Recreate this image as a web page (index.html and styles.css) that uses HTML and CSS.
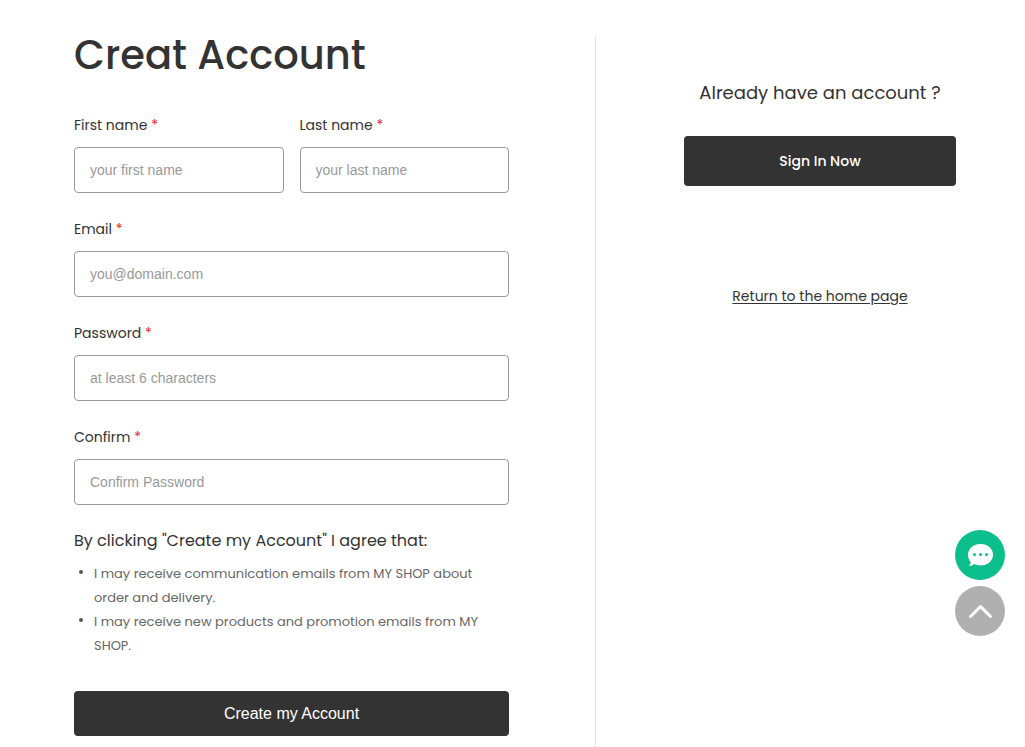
FILE: index.html
```
<!DOCTYPE html>
<html lang="en">
<head>
    <meta charset="UTF-8">
    <meta name="viewport" content="width=device-width, initial-scale=1">
    <title>Creat Account</title>
    <link rel="stylesheet" href="styles.css">
</head>
<body>
    <main class="account">
        <form class="register">
            <h1>Creat Account</h1>

            <div class="name-row">
                <div class="field">
                    <label for="firstName">First name <span class="required">*</span></label>
                    <input type="text" id="firstName" placeholder="your first name">
                </div>
                <div class="field">
                    <label for="lastName">Last name <span class="required">*</span></label>
                    <input type="text" id="lastName" placeholder="your last name">
                </div>
            </div>

            <div class="field">
                <label for="email">Email <span class="required">*</span></label>
                <input type="email" id="email" placeholder="you@domain.com">
            </div>

            <div class="field">
                <label for="password">Password <span class="required">*</span></label>
                <input type="password" id="password" placeholder="at least 6 characters">
            </div>

            <div class="field">
                <label for="confirm">Confirm <span class="required">*</span></label>
                <input type="password" id="confirm" placeholder="Confirm Password">
            </div>

            <p class="terms-title">By clicking "Create my Account" I agree that:</p>
            <ul class="terms">
                <li>I may receive communication emails from MY SHOP about order and delivery.</li>
                <li>I may receive new products and promotion emails from MY SHOP.</li>
            </ul>

            <button type="submit" class="btn btn-create">Create my Account</button>
        </form>

        <aside class="login">
            <h2>Already have an account ?</h2>
            <a href="#" class="btn btn-login">Sign In Now</a>
            <a href="#" class="home-link">Return to the home page</a>
        </aside>
    </main>

    <div class="float-tools">
        <button type="button" class="float-btn chat" aria-label="Chat">
            <svg width="50" height="50" viewBox="0 0 50 50">
                <path fill="#fff" d="M25.500 14C32.500 14 38 18.700 38 24.700S32.500 35.500 25.500 35.500c-2.400 0-4.600-.5-6.500-1.400-1.300 1.200-2.700 1.900-4 1.900-.7 0-.8-.7-.3-1.200.8-.9 1-1.900.9-2.900C14 30.100 13 27.500 13 24.700 13 18.700 18.500 14 25.500 14z"/>
                <circle cx="19.500" cy="24.500" r="1.500" fill="#0abf8c"/>
                <circle cx="25.500" cy="24.500" r="1.500" fill="#0abf8c"/>
                <circle cx="31.500" cy="24.500" r="1.500" fill="#0abf8c"/>
            </svg>
        </button>
        <button type="button" class="float-btn to-top" aria-label="Back to top">
            <svg width="50" height="50" viewBox="0 0 50 50">
                <path fill="none" stroke="#fff" stroke-width="3" stroke-linecap="round" stroke-linejoin="round" d="M15.500 30.500l10-10 10 10"/>
            </svg>
        </button>
    </div>
</body>
</html>
```
FILE: styles.css
```
:root {
    --dark-color: #333;
    --text-color: #666;
    --border-color: #999;
    --required-color: #f5222d;
    --chat-color: #0abf8c;
}

* {
    box-sizing: border-box;
}

body {
    font-family: 'Poppins', 'Inter', sans-serif;
    font-size: 14px;
    color: var(--dark-color);
    background-color: #fff;
    margin: 0;
}

.account {
    display: grid;
    grid-template-columns: 1fr 361px;
    column-gap: 86px;
    min-height: 100vh;
    padding: 36px 69px 0 74px;
}

h1 {
    margin: 0 0 40px;
    font-size: 40px;
    font-weight: 500;
    line-height: 38px;
}

.name-row {
    display: grid;
    grid-template-columns: 1fr 1fr;
    column-gap: 16px;
}

.field {
    margin-bottom: 25px;
}

label {
    display: block;
    margin-bottom: 10px;
    font-size: 14px;
    line-height: 23px;
}

.required {
    color: var(--required-color);
}

input {
    display: block;
    width: 100%;
    height: 46px;
    padding: 0 15px;
    border: 1px solid var(--border-color);
    border-radius: 4px;
    background-color: #fff;
    color: var(--dark-color);
    font-family: 'Liberation Sans', sans-serif;
    font-size: 14px;
}

input::placeholder {
    color: #999;
    opacity: 1;
}

.terms-title {
    margin: 0 0 10px;
    font-size: 16px;
    line-height: 22px;
}

.terms {
    margin: 0 0 33px;
    padding-left: 20px;
    color: var(--text-color);
    font-size: 13px;
    line-height: 24px;
    list-style: none;
}

.terms li::before {
    content: "";
    float: left;
    width: 4px;
    height: 4px;
    margin: 8px 0 0 -15px;
    border-radius: 50%;
    background-color: #555;
}

.btn {
    display: block;
    width: 100%;
    border: none;
    border-radius: 4px;
    background-color: var(--dark-color);
    color: #fff;
    text-align: center;
    text-decoration: none;
    cursor: pointer;
}

.btn-create {
    height: 45px;
    font-family: 'Liberation Sans', sans-serif;
    font-size: 16px;
}

.btn-login {
    font-size: 14px;
    font-weight: 500;
    line-height: 50px;
}

.btn:hover {
    background-color: #000;
}

.login {
    padding: 42px 0 0 88px;
    border-left: 1px solid #e5e5e5;
    text-align: center;
}

h2 {
    margin: 0 0 28px;
    font-size: 18px;
    font-weight: 400;
    line-height: 30px;
}

.home-link {
    display: inline-block;
    margin-top: 98px;
    color: var(--dark-color);
    line-height: 24px;
    text-underline-offset: 2px;
}

.float-tools {
    position: fixed;
    right: 20px;
    bottom: 111px;
    display: flex;
    flex-direction: column;
    gap: 6px;
}

.float-btn {
    width: 50px;
    height: 50px;
    padding: 0;
    border: none;
    border-radius: 50%;
    cursor: pointer;
}

.float-btn svg {
    display: block;
}

.chat {
    background-color: var(--chat-color);
}

.to-top {
    background-color: #b0b0b0;
}
```
